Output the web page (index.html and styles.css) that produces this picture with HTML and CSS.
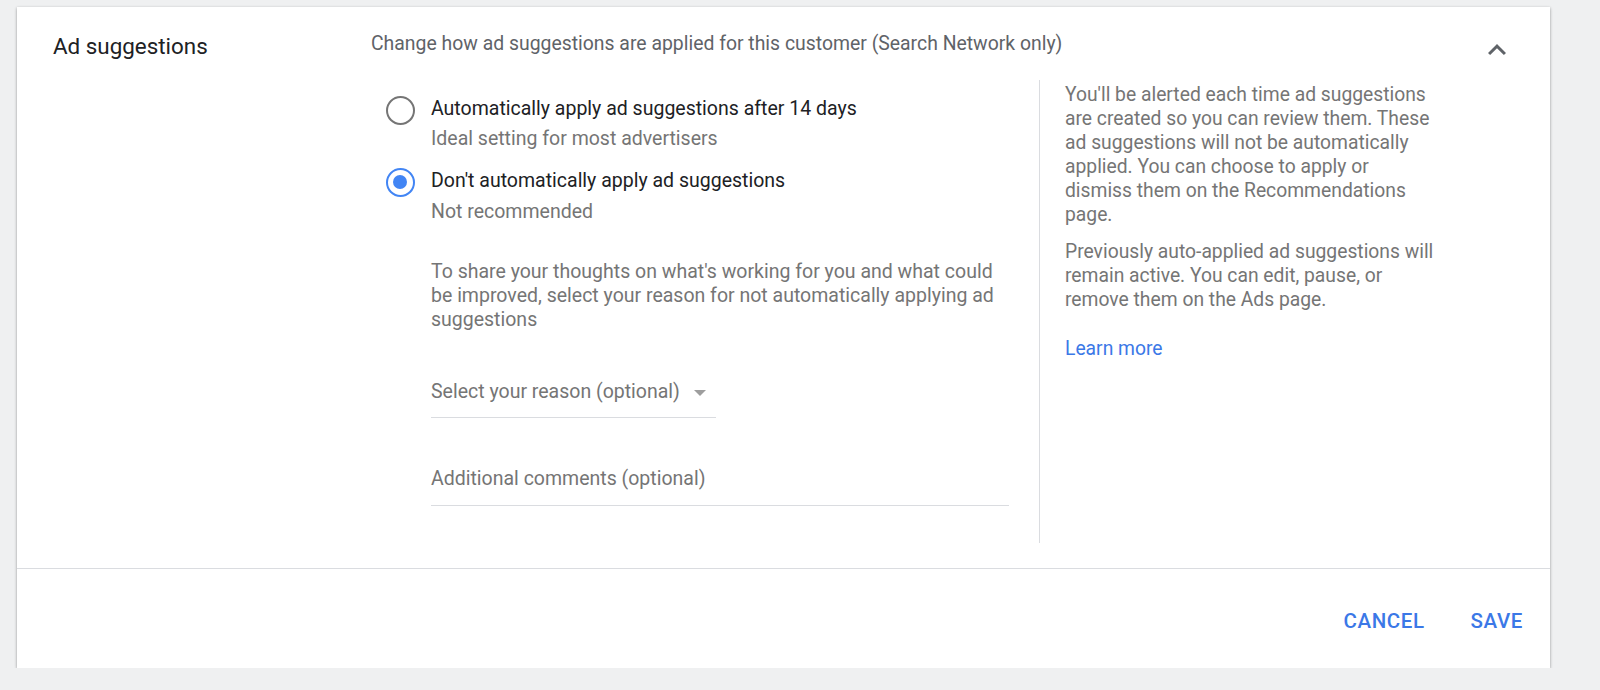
FILE: index.html
```html
<!DOCTYPE html>
<html>
<head>
<meta charset="utf-8">
<link rel="stylesheet" href="styles.css">
</head>
<body>
<div class="card">
  <div class="section">
    <div class="label">Ad suggestions</div>
    <div class="main">
      <div class="head">
        <div class="subtitle">Change how ad suggestions are applied for this customer (Search Network only)</div>
        <svg class="chevron" width="36" height="36" viewBox="0 0 24 24"><path d="M7.41 15.41L12 10.83l4.59 4.58L18 14l-6-6-6 6z" fill="#5f6368"/></svg>
      </div>
      <div class="body">
        <div class="options">
          <div class="option first">
            <span class="radio"></span>
            <div class="opt-text">
              <div class="opt-title">Automatically apply ad suggestions after 14 days</div>
              <div class="opt-sub">Ideal setting for most advertisers</div>
            </div>
          </div>
          <div class="option second">
            <span class="radio checked"></span>
            <div class="opt-text">
              <div class="opt-title">Don't automatically apply ad suggestions</div>
              <div class="opt-sub">Not recommended</div>
            </div>
          </div>
          <div class="feedback">
            <p class="prompt">To share your thoughts on what's working for you and what could be improved, select your reason for not automatically applying ad suggestions</p>
            <div class="select">
              <span>Select your reason (optional)</span>
              <span class="caret"></span>
            </div>
            <div class="comments">Additional comments (optional)</div>
          </div>
        </div>
        <div class="help">
          <p>You'll be alerted each time ad suggestions are created so you can review them. These ad suggestions will not be automatically applied. You can choose to apply or dismiss them on the Recommendations page.</p>
          <p>Previously auto-applied ad suggestions will remain active. You can edit, pause, or remove them on the Ads page.</p>
          <a class="learn">Learn more</a>
        </div>
      </div>
    </div>
  </div>
  <div class="footer">
    <button class="btn">CANCEL</button>
    <button class="btn">SAVE</button>
  </div>
</div>
</body>
</html>
```

FILE: styles.css
```css
html, body {
  margin: 0;
  padding: 0;
  background: #eff0f1;
  font-family: Roboto, "Noto Sans", sans-serif;
}
body {
  padding: 7px 50px 0 17px;
}
.card {
  background: #fff;
  box-shadow: 0 1px 3px rgba(0,0,0,0.3), 0 1px 2px rgba(0,0,0,0.1);
  width: 1533px;
  height: 661px;
  display: flex;
  flex-direction: column;
}
.section {
  display: flex;
  height: 562px;
  border-bottom: 1px solid #dadce0;
  box-sizing: border-box;
}
.label {
  width: 318px;
  padding: 27px 0 0 36px;
  font-size: 22.4px;
  line-height: 24px;
  color: #202124;
  flex-shrink: 0;
}
.main {
  flex: 1;
  display: flex;
  flex-direction: column;
}
.head {
  display: flex;
  align-items: center;
  padding-top: 25px;
  height: 24px;
}
.subtitle {
  flex: 1;
  font-size: 19.4px;
  line-height: 24px;
  color: #5f6368;
}
.chevron {
  margin: 12px 35px 0 0;
  width: 36px;
  height: 36px;
}
.body {
  display: flex;
  margin-top: 24px;
}
.options {
  width: 653px;
  padding-left: 15px;
  border-right: 1px solid #dadce0;
  height: 463px;
}
.option {
  display: flex;
  align-items: flex-start;
}
.option.first {
  margin-top: 17px;
}
.option.second {
  margin-top: 18px;
}
.radio {
  width: 29px;
  height: 29px;
  box-sizing: border-box;
  border: 2.5px solid #757575;
  border-radius: 50%;
  margin: -1px 16px 0 0;
  flex-shrink: 0;
  position: relative;
}
.radio.checked {
  border-color: #4285f4;
}
.radio.checked::after {
  content: "";
  position: absolute;
  left: 5px;
  top: 5px;
  width: 14px;
  height: 14px;
  border-radius: 50%;
  background: #4285f4;
}
.opt-title {
  font-size: 19.5px;
  line-height: 24px;
  color: #202124;
}
.opt-sub {
  font-size: 19.5px;
  line-height: 24px;
  margin-top: 6px;
  color: #757575;
}
.second .opt-sub {
  margin-top: 7px;
}
.feedback {
  padding-left: 45px;
}
.prompt {
  margin: 36px 0 0;
  font-size: 19.5px;
  line-height: 24px;
  color: #757575;
  width: 585px;
}
.select {
  margin-top: 48px;
  width: 285px;
  border-bottom: 1px solid #dadce0;
  height: 37px;
  display: flex;
  align-items: flex-start;
  font-size: 19.5px;
  line-height: 24px;
  color: #757575;
}
.caret {
  margin: 10px 0 0 14px;
  width: 0;
  height: 0;
  border-left: 6px solid transparent;
  border-right: 6px solid transparent;
  border-top: 6px solid #9e9e9e;
}
.comments {
  margin-top: 49px;
  width: 578px;
  height: 38px;
  border-bottom: 1px solid #dadce0;
  font-size: 19.5px;
  line-height: 24px;
  color: #757575;
}
.help {
  padding: 3px 0 0 25px;
  width: 373px;
}
.help p {
  margin: 0 0 13px;
  font-size: 19.3px;
  line-height: 24px;
  color: #757575;
}
.learn {
  display: block;
  margin-top: 25px;
  font-size: 19.3px;
  line-height: 24px;
  color: #3b78e7;
}
.footer {
  flex: 1;
  display: flex;
  justify-content: flex-end;
  align-items: flex-start;
  padding: 40px 27px 0 0;
  gap: 46px;
}
.btn {
  font-family: Roboto, "Noto Sans", sans-serif;
  font-weight: 500;
  font-size: 20.5px;
  letter-spacing: 0.6px;
  color: #3b78e7;
  background: none;
  border: none;
  padding: 0;
  line-height: 24px;
}
```
